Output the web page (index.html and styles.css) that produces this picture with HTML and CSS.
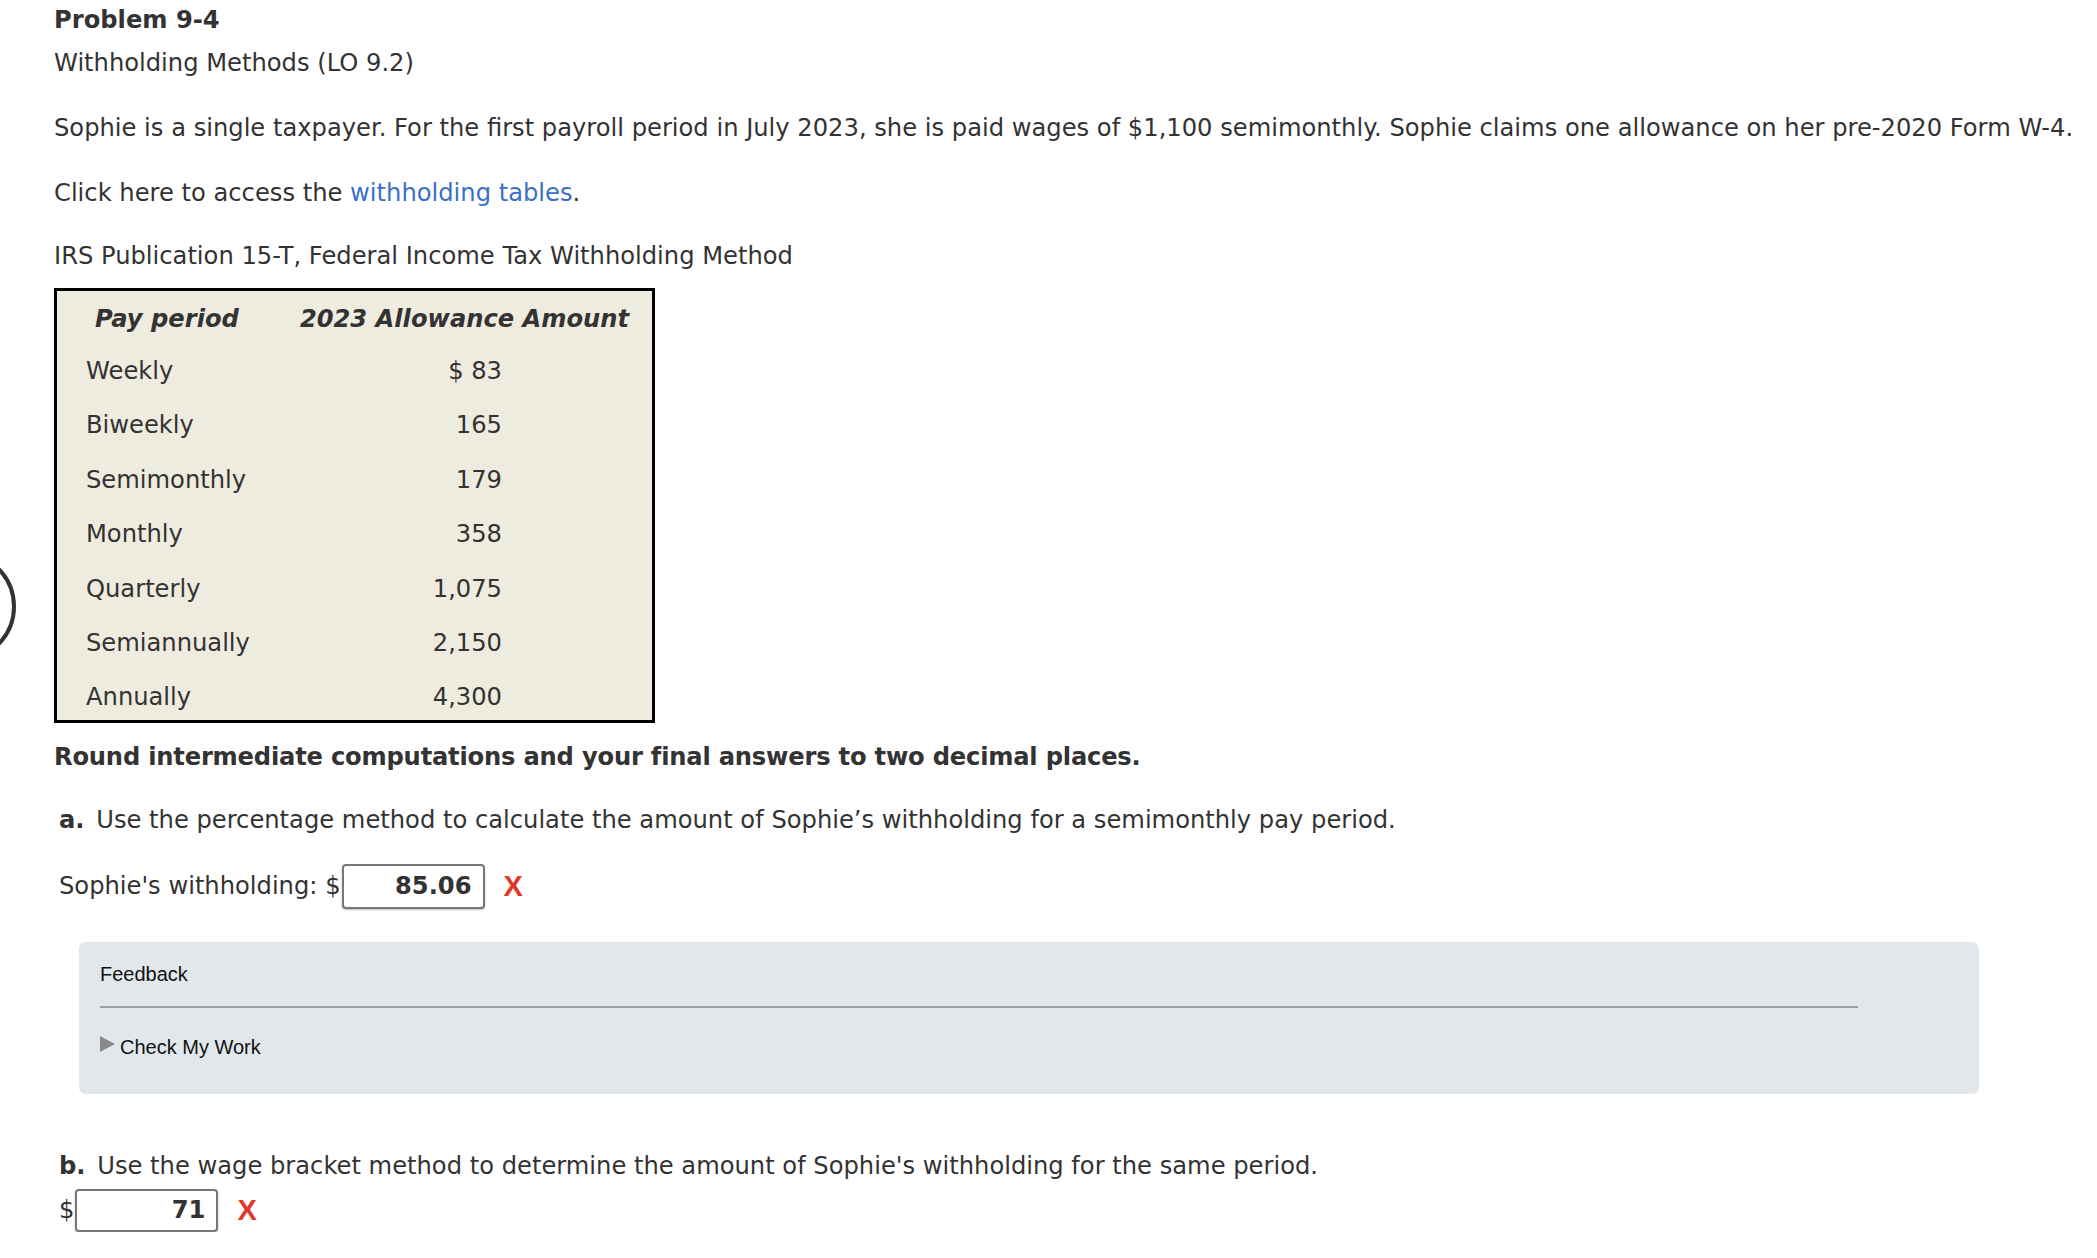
FILE: index.html
```html
<!DOCTYPE html>
<html lang="en">
<head>
<meta charset="utf-8">
<title>Problem 9-4</title>
<link rel="stylesheet" href="styles.css">
</head>
<body>
<div class="nav-circle"></div>
<main class="page">
  <h1 class="title">Problem 9-4</h1>
  <p class="subtitle">Withholding Methods (LO 9.2)</p>
  <p class="para p-sophie">Sophie is a single taxpayer. For the first payroll period in July 2023, she is paid wages of $1,100 semimonthly. Sophie claims one allowance on her pre-2020 Form W-4.</p>
  <p class="para p-click">Click here to access the <a class="link" href="#">withholding tables</a>.</p>
  <p class="para p-irs">IRS Publication 15-T, Federal Income Tax Withholding Method</p>

  <div class="allow-table">
    <div class="th th-1">Pay period</div><div class="th th-2">2023 Allowance Amount</div>
    <div class="td-label">Weekly</div><div class="td-val">$ 83</div>
    <div class="td-label">Biweekly</div><div class="td-val">165</div>
    <div class="td-label">Semimonthly</div><div class="td-val">179</div>
    <div class="td-label">Monthly</div><div class="td-val">358</div>
    <div class="td-label">Quarterly</div><div class="td-val">1,075</div>
    <div class="td-label">Semiannually</div><div class="td-val">2,150</div>
    <div class="td-label">Annually</div><div class="td-val">4,300</div>
  </div>

  <p class="round">Round intermediate computations and your final answers to two decimal places.</p>

  <p class="q q-a"><b class="letter">a.</b> Use the percentage method to calculate the amount of Sophie’s withholding for a semimonthly pay period.</p>
  <div class="answer-row row-a">
    <span class="answer-label">Sophie's withholding: $</span><span class="input input-a">85.06</span><span class="wrong">X</span>
  </div>

  <section class="feedback">
    <div class="fb-title">Feedback</div>
    <div class="fb-rule"></div>
    <div class="fb-check"><span class="tri"></span>Check My Work</div>
  </section>

  <p class="q q-b"><b class="letter">b.</b> Use the wage bracket method to determine the amount of Sophie's withholding for the same period.</p>
  <div class="answer-row row-b">
    <span class="answer-label">$</span><span class="input input-b">71</span><span class="wrong">X</span>
  </div>
</main>
</body>
</html>
```

FILE: styles.css
```css
html, body {
  margin: 0;
  padding: 0;
  background: #ffffff;
}
body {
  font-family: "DejaVu Sans", Verdana, sans-serif;
  font-size: 24.2px;
  color: #333333;
  overflow: hidden;
}
.nav-circle {
  position: absolute;
  left: -95px;
  top: 551px;
  width: 103px;
  height: 103px;
  border: 4.5px solid #333333;
  border-radius: 50%;
}
.page {
  padding-left: 54px;
}
.title {
  margin: 0;
  padding-top: 5px;
  font-size: 24.2px;
  line-height: 30px;
  font-weight: bold;
}
.subtitle {
  margin: 13px 0 0 0;
  line-height: 30px;
}
.para {
  margin: 35px 0 0 0;
  line-height: 30px;
  white-space: nowrap;
}
.p-irs {
  margin-top: 33px;
}
.link {
  color: #3a6fc7;
  text-decoration: none;
}
.allow-table {
  margin-top: 17px;
  width: 595px;
  border: 3px solid #000000;
  background: #eeecdf;
  display: grid;
  grid-template-columns: 220px 1fr;
  grid-template-rows: 53px repeat(6, 54.4px) 49.6px;
  align-items: start;
}
.th,
.td-label,
.td-val {
  padding-top: 12px;
  line-height: 30px;
}
.th {
  padding-top: 13px;
  font-weight: bold;
  font-style: italic;
  text-align: center;
}
.td-label {
  padding-left: 29px;
}
.td-val {
  text-align: right;
  padding-right: 150px;
}
.round {
  margin: 19px 0 0 0;
  line-height: 30px;
  font-weight: bold;
  letter-spacing: -0.2px;
}
.q {
  margin: 33px 0 0 5px;
  line-height: 30px;
  white-space: nowrap;
}
.letter {
  margin-right: 4px;
}
.answer-row {
  display: flex;
  align-items: center;
  margin-left: 5px;
}
.row-a {
  margin-top: 29px;
}
.input {
  box-sizing: border-box;
  height: 45px;
  border: 2px solid #777777;
  border-radius: 4px;
  box-shadow: 0 1px 2px rgba(0,0,0,0.25);
  background: #ffffff;
  font-weight: bold;
  text-align: right;
  padding-right: 11px;
  line-height: 41px;
  color: #333333;
}
.input-a {
  width: 143px;
  margin-left: 1px;
}
.input-b {
  width: 143px;
  margin-left: 1px;
  height: 43px;
  line-height: 39px;
}
.wrong {
  font-family: "Liberation Sans", Arial, sans-serif;
  font-weight: bold;
  font-size: 29px;
  color: #e5352b;
  margin-left: 19px;
}
.feedback {
  margin: 33px 0 0 25px;
  width: 1900px;
  box-sizing: border-box;
  height: 152px;
  background: #e2e7eb;
  border-radius: 7px;
  padding: 20px 121px 0 21px;
  font-family: "Liberation Sans", Arial, sans-serif;
  font-size: 20px;
  color: #111111;
}
.fb-title {
  line-height: 24px;
}
.fb-rule {
  margin-top: 20px;
  height: 2px;
  background: #9aa0a4;
}
.fb-check {
  margin-top: 27px;
  line-height: 24px;
  display: flex;
  align-items: center;
}
.tri {
  width: 0;
  height: 0;
  border-top: 8px solid transparent;
  border-bottom: 8px solid transparent;
  border-left: 15px solid #8a8a8a;
  margin-right: 5px;
  margin-top: -6px;
}
.q-b {
  margin-top: 57px;
}
.row-b {
  margin-top: 8px;
}
```
